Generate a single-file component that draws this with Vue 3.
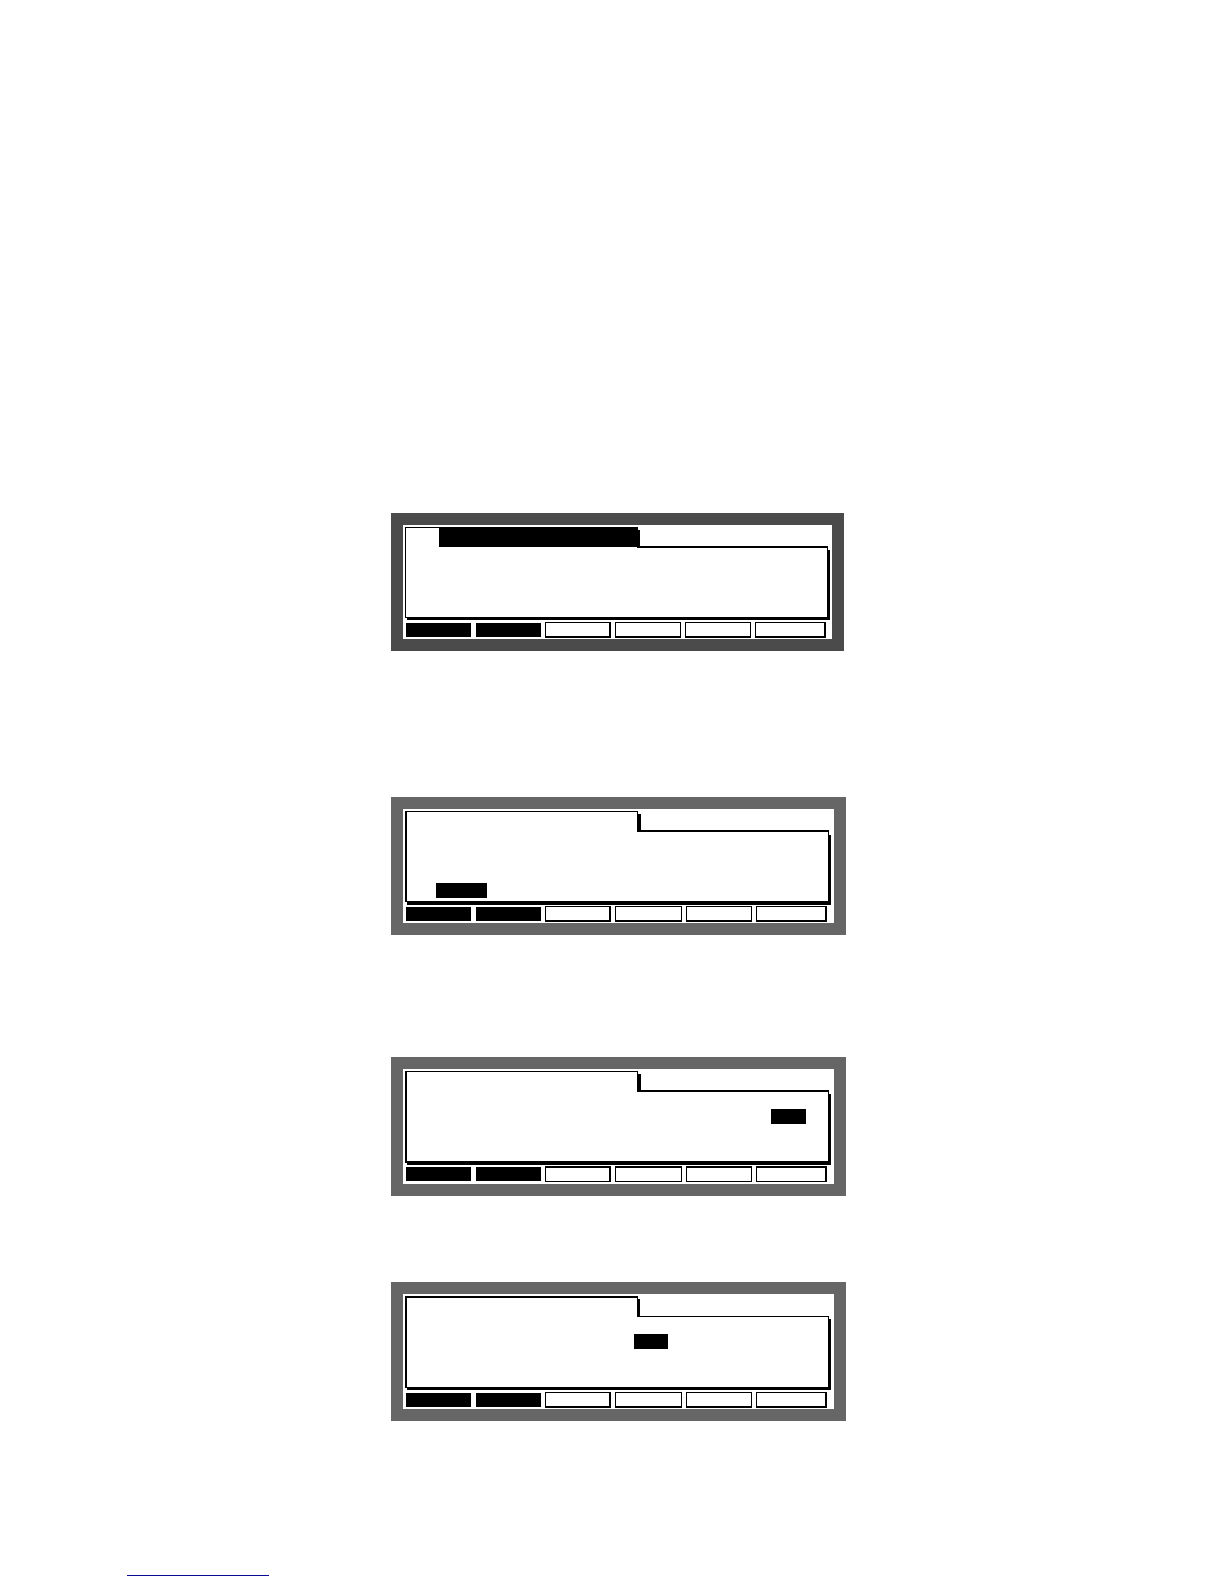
<template>
  <main class="page">
    <section v-for="d in displays" :key="d.id" :class="['display', d.id]">
      <div class="screen">
        <div class="tab-row">
          <div class="tab">
            <span v-if="d.tabSelected" class="tab-selected"></span>
          </div>
          <div class="tab-rest"></div>
        </div>

        <div class="body">
          <div v-for="row in 4" :key="row" class="row">
            <span
              v-if="d.cursor && d.cursor.row === row"
              class="cursor"
              :style="{ marginLeft: d.cursor.start + '%', width: d.cursor.size + '%' }"
            ></span>
          </div>
        </div>

        <div class="soft-keys">
          <button
            v-for="n in 6"
            :key="n"
            type="button"
            :class="['key', { active: n <= 2 }]"
            :aria-label="'F' + n"
          ></button>
        </div>
      </div>
    </section>

    <footer class="footer">
      <a href="#" class="footer-link" aria-label="Link"></a>
    </footer>
  </main>
</template>

<script setup>
// cursor: row is 1-4, start and size are percentages of the body width
const displays = [
  { id: 'first', tabSelected: true, cursor: null },
  { id: 'second', tabSelected: false, cursor: { row: 4, start: 6.9, size: 12.1 } },
  { id: 'third', tabSelected: false, cursor: { row: 2, start: 86.4, size: 8.3 } },
  { id: 'fourth', tabSelected: false, cursor: { row: 2, start: 53.9, size: 8.1 } }
]
</script>

<style>
body { margin: 0; background: #fff; }
</style>

<style scoped>
.page { display: grid; grid-template-columns: 391fr 455fr 378fr; padding: 513px 0 8px; font-family: "Liberation Sans", Arial, sans-serif; }

.display { grid-column: 2; box-sizing: border-box; padding: 12px; background: #666; }
.display.first { background: #4b4b4b; margin: 0 2px 146px 0; }
.display.second { margin-bottom: 122px; }
.display.third { margin-bottom: 86px; }
.display.fourth { margin-bottom: 154px; }

.screen { background: #fff; padding: 2px 5px 1px 2px; }
.first .screen { padding-right: 4px; }
.third .screen { padding-bottom: 2px; }

/* Folder tab */
.tab-row { display: flex; height: 21px; }
.tab { flex: 0 0 55%; box-sizing: border-box; display: flex; justify-content: flex-end; background: #fff; border: 1px solid #000; border-left-width: 2px; border-bottom: none; box-shadow: 3px 3px 0 #000; }
.tab-selected { width: 85.5%; height: 19px; background: #000; }
.tab-rest { flex: 1; border-bottom: 2px solid #000; }
.first .tab { border-left-width: 1px; box-shadow: 2px 3px 0 #000; }
.fourth .tab { border-top-width: 2px; box-shadow: 2px 3px 0 #000; }
.fourth .tab-rest { border-bottom-width: 1px; }

/* Folder body */
.body { position: relative; display: flex; flex-direction: column; gap: 2px; padding-bottom: 3px; background: #fff; border: 1px solid #000; border-width: 0 1px 1px 2px; box-shadow: 2px 2px 0 #000; }
.first .body { border-left-width: 1px; }
.second .body { box-shadow: 2px 3px 0 #000; }
.third .body { border-bottom-width: 2px; }
.fourth .body { padding-bottom: 4px; }
.row { display: flex; height: 15px; }
.cursor { background: #000; }

/* Soft keys */
.soft-keys { display: grid; grid-template-columns: repeat(5, 66fr) 71fr; gap: 4px; margin: 4px 2px 0 0; }
.third .soft-keys { margin-top: 3px; }
.key { height: 16px; padding: 0; box-sizing: border-box; background: #fff; border: 1px solid #000; border-bottom-width: 2px; border-radius: 0; cursor: pointer; }
.key:nth-child(3), .key:nth-child(6) { border-right-width: 2px; }
.third .key { border-top-width: 2px; border-bottom-width: 1px; }
.soft-keys .key.active { background: #000; border: 1px solid #fff; border-right: none; }

.footer { grid-column: 1 / -1; padding-left: 127px; display: flex; }
.footer-link { width: 142px; border-bottom: 1px solid #0b0b99; }
</style>
